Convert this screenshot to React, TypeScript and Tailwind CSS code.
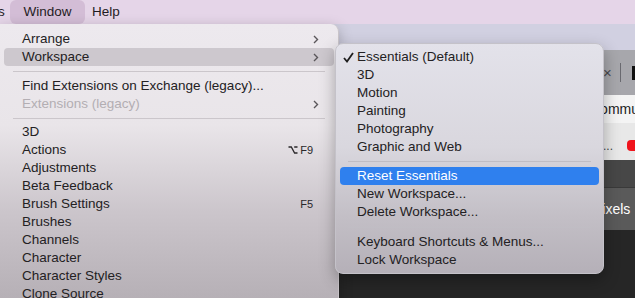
import React from "react";

type Item = {
  label?: string;
  sep?: boolean;
  sub?: boolean;
  disabled?: boolean;
  active?: boolean;
  shortcut?: React.ReactNode;
  sepH?: string;
};

const font = { fontFamily: '"Liberation Sans", Arial, sans-serif' };

function Chevron() {
  return (
    <svg width="6" height="9" viewBox="0 0 6 9" className="text-[#5a565a]">
      <path d="M1 1 L4.5 4.5 L1 8" fill="none" stroke="currentColor" strokeWidth="1.4" />
    </svg>
  );
}

function OptionKey() {
  return (
    <svg width="10" height="8" viewBox="0 0 10 8" className="text-[#2a272a]">
      <path d="M0.5 1 H3.3 L6.6 7 H9.5 M6.2 1 H9.5" fill="none" stroke="currentColor" strokeWidth="1.3" />
    </svg>
  );
}

function Check() {
  return (
    <svg width="11" height="11" viewBox="0 0 11 11" className="text-[#1e1e1e]">
      <path d="M1 6 L4 9.5 L10 1" fill="none" stroke="currentColor" strokeWidth="1.8" />
    </svg>
  );
}

const mainItems: Item[] = [
  { label: "Arrange", sub: true },
  { label: "Workspace", sub: true, active: true },
  { sep: true, sepH: "h-[11px]" },
  { label: "Find Extensions on Exchange (legacy)..." },
  { label: "Extensions (legacy)", sub: true, disabled: true },
  { sep: true, sepH: "h-[10px]" },
  { label: "3D" },
  {
    label: "Actions",
    shortcut: (
      <span className="flex items-center gap-[2px]">
        <OptionKey />
        <span>F9</span>
      </span>
    ),
  },
  { label: "Adjustments" },
  { label: "Beta Feedback" },
  { label: "Brush Settings", shortcut: <span>F5</span> },
  { label: "Brushes" },
  { label: "Channels" },
  { label: "Character" },
  { label: "Character Styles" },
  { label: "Clone Source" },
];

const subItems: (Item & { checked?: boolean })[] = [
  { label: "Essentials (Default)", checked: true },
  { label: "3D" },
  { label: "Motion" },
  { label: "Painting" },
  { label: "Photography" },
  { label: "Graphic and Web" },
  { sep: true, sepH: "h-[11px]" },
  { label: "Reset Essentials", active: true },
  { label: "New Workspace..." },
  { label: "Delete Workspace..." },
  { sep: true, sepH: "h-[12px]" },
  { label: "Keyboard Shortcuts & Menus..." },
  { label: "Lock Workspace" },
];

function MainMenu() {
  return (
    <div className="absolute left-0 top-[24px] h-[290px] w-[339px] rounded-tr-[8px] border-r border-[#c9c4c9] bg-[linear-gradient(to_bottom,#ede9ee_0%,#e9e5e9_35%,#cbc5cb_65%,#b2acb2_100%)] pt-[6px] shadow-[0_4px_14px_rgba(0,0,0,0.25)]">
      {mainItems.map((it, i) =>
        it.sep ? (
          <div key={i} className={`flex items-center px-[13px] ${it.sepH}`}>
            <div className="h-px w-full bg-[#cbc6cb]" />
          </div>
        ) : (
          <div
            key={i}
            className={`mx-[4px] flex h-[18px] items-center rounded-[4px] pl-[18px] pr-[15px] text-[13.5px] ${
              it.active ? "bg-[#cdc8ce]" : ""
            } ${it.disabled ? "text-[#b3aeb3]" : "text-[#232123]"}`}
          >
            <span className="flex-1">{it.label}</span>
            {it.sub && <Chevron />}
            {it.shortcut && (
              <span className="pr-[6px] text-[11px] text-[#2a272a]">{it.shortcut}</span>
            )}
          </div>
        )
      )}
    </div>
  );
}

function SubMenu() {
  return (
    <div className="absolute left-[335px] top-[43px] w-[269px] rounded-[8px] border border-[#c4c2c9] bg-[linear-gradient(to_bottom,#e3e2ea_0%,#d9d7de_45%,#c3bfc6_75%,#b5b0b8_100%)] pb-[4px] pt-[4px] shadow-[0_6px_16px_rgba(0,0,0,0.3)]">
      {subItems.map((it, i) =>
        it.sep ? (
          <div key={i} className={`flex items-center px-[12px] ${it.sepH}`}>
            <div className="h-px w-full bg-[#c0bdc4]" />
          </div>
        ) : (
          <div
            key={i}
            className={`mx-[4px] flex h-[18px] items-center rounded-[4px] text-[13.5px] ${
              it.active ? "bg-[#2f80ee] text-white" : "text-[#232123]"
            }`}
          >
            <span className="flex w-[17px] pl-[3px]">{it.checked && <Check />}</span>
            <span>{it.label}</span>
          </div>
        )
      )}
    </div>
  );
}

export default function App() {
  return (
    <div className="relative h-[298px] w-[635px] overflow-hidden bg-[#262626]" style={font}>
      {/* menu bar */}
      <div className="flex h-[24px] items-stretch bg-[#e5d5e8] text-[13.5px] text-[#1f1c1f]">
        <span className="flex w-[10px] items-center justify-start overflow-hidden">
          <span className="-ml-[2px]">s</span>
        </span>
        <span className="flex w-[75px] items-center justify-center rounded-[6px] bg-[#d3bdd6]">Window</span>
        <span className="flex items-center pl-[7px]">Help</span>
      </div>
      {/* browser window behind */}
      <div className="h-[26px] bg-[#d1d0e1]" />
      <div className="flex h-[45px] items-center justify-end bg-[#a7a7ac] pl-[603px]">
        <span className="text-[15px] leading-none text-[#4a4a4f]">×</span>
        <span className="ml-[8px] h-[19px] w-px bg-[#6a6a70]" />
        <span className="ml-[11px] h-[14px] flex-1 bg-[#111]" />
      </div>
      <div className="flex h-[28px] items-center bg-[#f4f4f4] pl-[590px] text-[14px] text-[#222]">
        Commu
      </div>
      <div className="flex h-[37px] items-center bg-[#e8e8e8] pl-[603px] pt-[8px] text-[12px] text-[#444]">
        <span>...</span>
        <span className="ml-[14px] h-[11px] flex-1 rounded-l-[4px] bg-[#f0141c]" />
      </div>
      <div className="h-[28px] border-b border-[#3a3a3a] bg-[#474747]" />
      <div className="flex h-[42px] items-center bg-[#5a5a5a] pl-[593px] text-[14px] text-white">
        Pixels
      </div>

      <MainMenu />
      <SubMenu />
    </div>
  );
}
